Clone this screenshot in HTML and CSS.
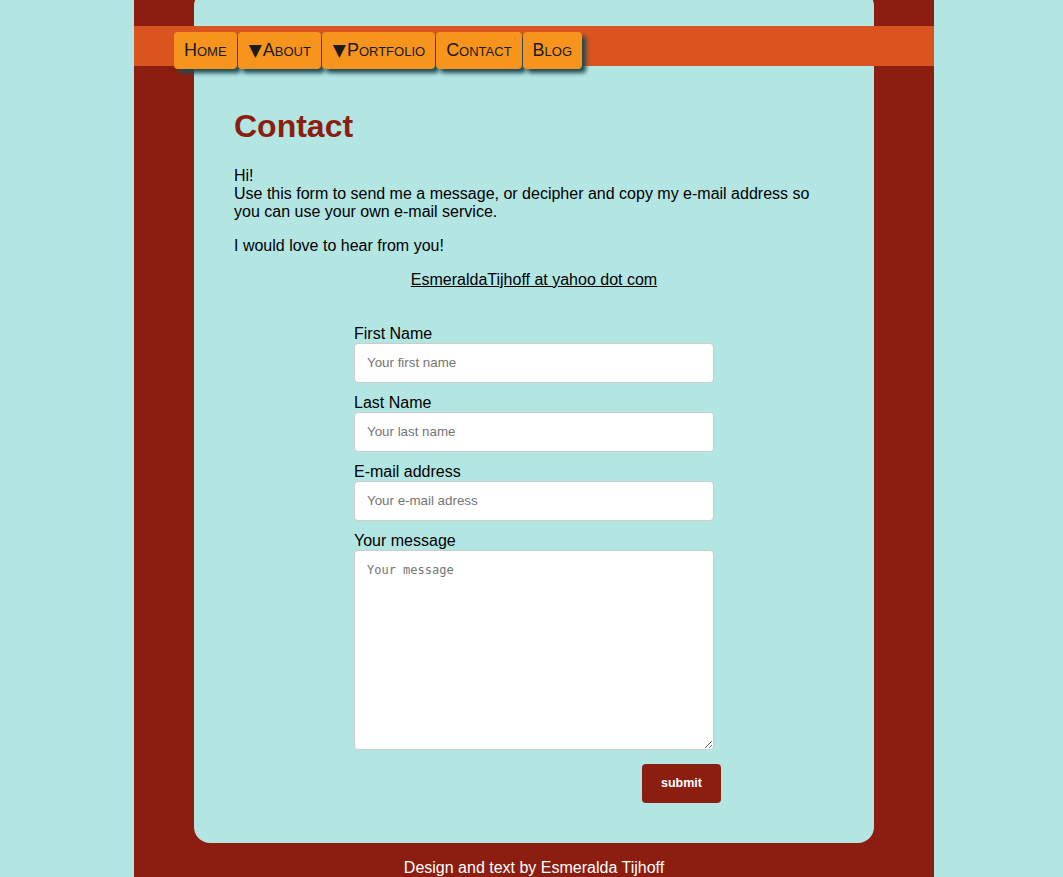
FILE: index.html
```html
<!DOCTYPE html>
<html lang="en">
<head>
<meta charset="utf-8">
<title>Contact</title>
<link rel="stylesheet" href="styles.css">
</head>
<body>
<div class="wrapper">
  <nav class="topnav">
    <a class="navbtn" href="#">Home</a>
    <a class="navbtn" href="#"><span class="tri">▼</span>About</a>
    <a class="navbtn" href="#"><span class="tri">▼</span>Portfolio</a>
    <a class="navbtn" href="#">Contact</a>
    <a class="navbtn" href="#">Blog</a>
  </nav>
  <main class="panel">
    <h1 class="title">Contact</h1>
    <p class="text">Hi!<br>Use this form to send me a message, or decipher and copy my e-mail address so you can use your own e-mail service.</p>
    <p class="text">I would love to hear from you!</p>
    <p class="text center"><a class="mail" href="#">EsmeraldaTijhoff at yahoo dot com</a></p>
    <form class="form">
      <label class="label" for="fn">First Name</label>
      <input class="field" id="fn" type="text" placeholder="Your first name">
      <label class="label" for="ln">Last Name</label>
      <input class="field" id="ln" type="text" placeholder="Your last name">
      <label class="label" for="em">E-mail address</label>
      <input class="field" id="em" type="text" placeholder="Your e-mail adress">
      <label class="label" for="msg">Your message</label>
      <textarea class="area" id="msg" placeholder="Your message"></textarea>
      <div class="actions">
        <button class="submit" type="button">submit</button>
      </div>
    </form>
  </main>
  <footer class="footer">Design and text by Esmeralda Tijhoff</footer>
</div>
</body>
</html>
```
FILE: styles.css
```css
html, body {
  margin: 0;
  background: #b3e5e3;
  font-family: "Liberation Sans", Arial, sans-serif;
  font-size: 16px;
  color: #000;
}
body {
  padding-left: 5px;
  overflow: hidden;
}
.wrapper {
  position: relative;
  width: 800px;
  margin: 0 auto;
  background: #8b1e10;
  min-height: 890px;
}
.topnav {
  position: absolute;
  top: 36px;
  left: 0;
  right: 0;
  height: 40px;
  background: #d9541e;
  box-sizing: border-box;
  padding: 6px 0 0 40px;
  display: flex;
  align-items: flex-start;
  gap: 1px;
  z-index: 2;
}
.navbtn {
  display: block;
  background: #f7941d;
  color: #1a1a1a;
  text-decoration: none;
  font-variant: small-caps;
  font-size: 18px;
  line-height: 21px;
  padding: 8px 10px;
  border-radius: 4px;
  box-shadow: 4px 4px 4px #1f4a52;
}
.tri {
  font-family: "DejaVu Sans", sans-serif;
  font-size: 17px;
  margin: 0 1px 0 1px;
}
.panel {
  margin: -10px 60px 0;
  background: #b3e5e3;
  border-radius: 16px;
  padding: 97px 40px 40px;
}
.title {
  font-size: 32px;
  font-weight: bold;
  color: #8b1e10;
  margin: 21.44px 0;
}
.text {
  margin: 16px 0;
  line-height: 18px;
}
.center {
  text-align: center;
}
.mail {
  color: #000;
  text-decoration: underline;
}
.form {
  width: 360px;
  margin: 0 auto;
  padding-top: 20px;
}
.label {
  display: block;
  line-height: 18px;
  height: 18px;
}
.field, .area {
  display: block;
  width: 100%;
  box-sizing: border-box;
  border: 1px solid #ccc;
  border-radius: 4px;
  background: #fff;
  margin: 0 0 11px;
}
.field {
  height: 40px;
  padding: 0 12px;
  font-family: "Liberation Sans", Arial, sans-serif;
  font-size: 13.333px;
}
.area {
  height: 200px;
  padding: 12px;
  font-family: "DejaVu Sans Mono", monospace;
  font-size: 12px;
  resize: vertical;
  margin-bottom: 14px;
}
.field::placeholder, .area::placeholder {
  color: #757575;
}
.actions {
  display: flex;
  justify-content: flex-end;
  margin-right: -7px;
}
.submit {
  background: #8b1e10;
  color: #fff;
  border: none;
  border-radius: 4px;
  font-family: "Liberation Sans", Arial, sans-serif;
  font-weight: bold;
  font-size: 12.5px;
  line-height: 15px;
  padding: 12px 19px;
}
.footer {
  color: #fff;
  text-align: center;
  line-height: 18px;
  padding-top: 16px;
}
```
